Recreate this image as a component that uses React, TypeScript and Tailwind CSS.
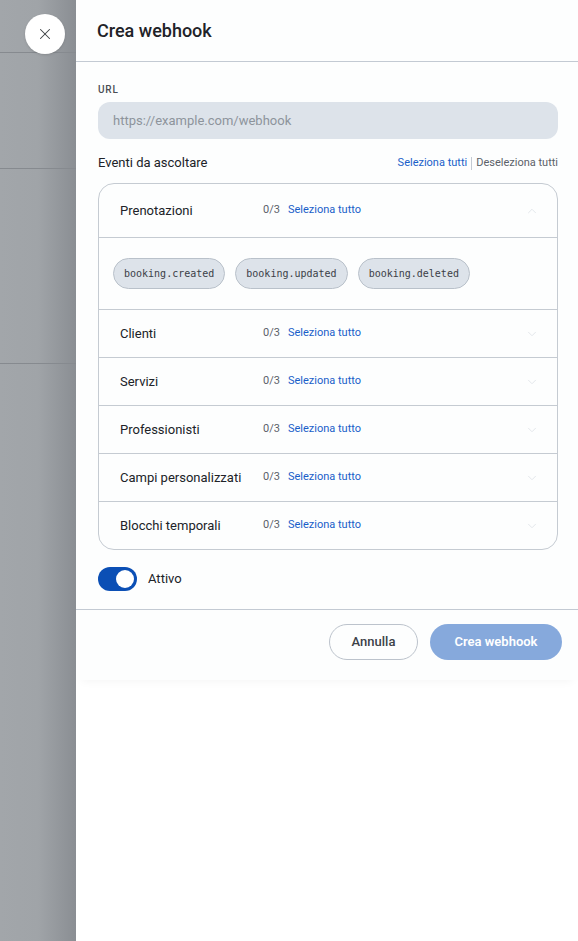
import { X, ChevronUp, ChevronDown } from "lucide-react";

const groups = [
  { name: "Prenotazioni", open: true, events: ["booking.created", "booking.updated", "booking.deleted"] },
  { name: "Clienti", open: false, events: [] },
  { name: "Servizi", open: false, events: [] },
  { name: "Professionisti", open: false, events: [] },
  { name: "Campi personalizzati", open: false, events: [] },
  { name: "Blocchi temporali", open: false, events: [] },
];

export default function App() {
  return (
    <div
      className="flex h-[941px] w-[578px] overflow-hidden bg-white"
      style={{ fontFamily: "Roboto, 'Noto Sans', sans-serif" }}
    >
      {/* backdrop */}
      <div className="relative w-[76px] shrink-0 bg-gradient-to-r from-[#a2a6aa] via-[#a0a4a8] to-[#8a8e93]">
        <div className="mt-[52px] h-px bg-[#868a8f]" />
        <div className="mt-[115px] h-px bg-[#868a8f]" />
        <div className="mt-[194px] h-px bg-[#868a8f]" />
        <button className="absolute left-[25px] top-[14px] flex h-10 w-10 items-center justify-center rounded-full bg-white text-[#3c4043] shadow-sm">
          <X className="h-[18px] w-[18px]" strokeWidth={1.4} />
        </button>
      </div>

      {/* panel */}
      <div className="flex w-[502px] flex-col">
        <div className="flex h-[62px] items-center border-b border-[#c3cad3] bg-[#fdfefe] px-[21px]">
          <h2 className="text-[18px] font-medium text-[#1f2328]">Crea webhook</h2>
        </div>

        <div className="bg-[#fdfefe] pl-[22px] pr-[20px] pt-[21px]">
          <label className="block text-[10px] font-medium leading-[14px] tracking-[0.08em] text-[#4a4f55]">URL</label>
          <div className="mt-[5px] flex h-[37px] items-center rounded-xl bg-[#dde3ea] px-[15px] text-[13px] text-[#8d949c]">
            https://example.com/webhook
          </div>

          <div className="mt-[15px] flex h-[18px] items-center justify-between">
            <span className="text-[13px] text-[#202328]">Eventi da ascoltare</span>
            <div className="flex items-center text-[11px]">
              <span className="text-[#1a5fc9]">Seleziona tutti</span>
              <span className="mx-[4px] h-[13px] w-px bg-[#c3cad3]" />
              <span className="text-[#5b6169]">Deseleziona tutti</span>
            </div>
          </div>

          <div className="mt-[11px] overflow-hidden rounded-2xl border border-[#c5cbd2]">
            {groups.map((g, i) => (
              <div key={g.name} className={i > 0 ? "border-t border-[#c5cbd2]" : ""}>
                <div className={`flex items-center pl-[21px] pr-[18px] ${g.open ? "h-[53px]" : "h-[47px]"}`}>
                  <span className="w-[143px] text-[13px] text-[#202328]">{g.name}</span>
                  <span className="text-[11px] text-[#5b6169]">0/3</span>
                  <span className="ml-[8px] text-[11px] text-[#1a5fc9]">Seleziona tutto</span>
                  <span className="ml-auto text-[#dfe3e8]">
                    {g.open ? (
                      <ChevronUp className="h-[14px] w-[14px]" strokeWidth={1.5} />
                    ) : (
                      <ChevronDown className="h-[14px] w-[14px]" strokeWidth={1.5} />
                    )}
                  </span>
                </div>
                {g.open && (
                  <div className="flex h-[72px] items-center gap-[10px] border-t border-[#c5cbd2] px-[14px]">
                    {g.events.map((e) => (
                      <span
                        key={e}
                        className="flex h-[31px] items-center rounded-full border border-[#b9c1ca] bg-[#dde3ea] px-[10px] text-[10px] text-[#3b4047]"
                        style={{ fontFamily: "'DejaVu Sans Mono', 'Liberation Mono', monospace" }}
                      >
                        {e}
                      </span>
                    ))}
                  </div>
                )}
              </div>
            ))}
          </div>

          <div className="mt-[17px] flex items-center gap-[11px] pb-[18px]">
            <div className="flex h-[24px] w-[39px] items-center justify-end rounded-full bg-[#0b4fb5] pr-[3px]">
              <div className="h-[18px] w-[18px] rounded-full bg-white" />
            </div>
            <span className="text-[13px] text-[#202328]">Attivo</span>
          </div>
        </div>

        <div className="flex h-[71px] items-start justify-end gap-[12px] border-t border-[#c3cad3] bg-[#fdfefe] px-[16px] pt-[14px] shadow-[0_6px_10px_-6px_rgba(0,0,0,0.06)]">
          <button className="h-[36px] w-[89px] rounded-full border border-[#bcc3cc] text-[13px] font-medium text-[#3c4148]">
            Annulla
          </button>
          <button className="h-[36px] w-[132px] rounded-full bg-[#86a9dc] text-[13px] font-semibold text-white">
            Crea webhook
          </button>
        </div>
      </div>
    </div>
  );
}
